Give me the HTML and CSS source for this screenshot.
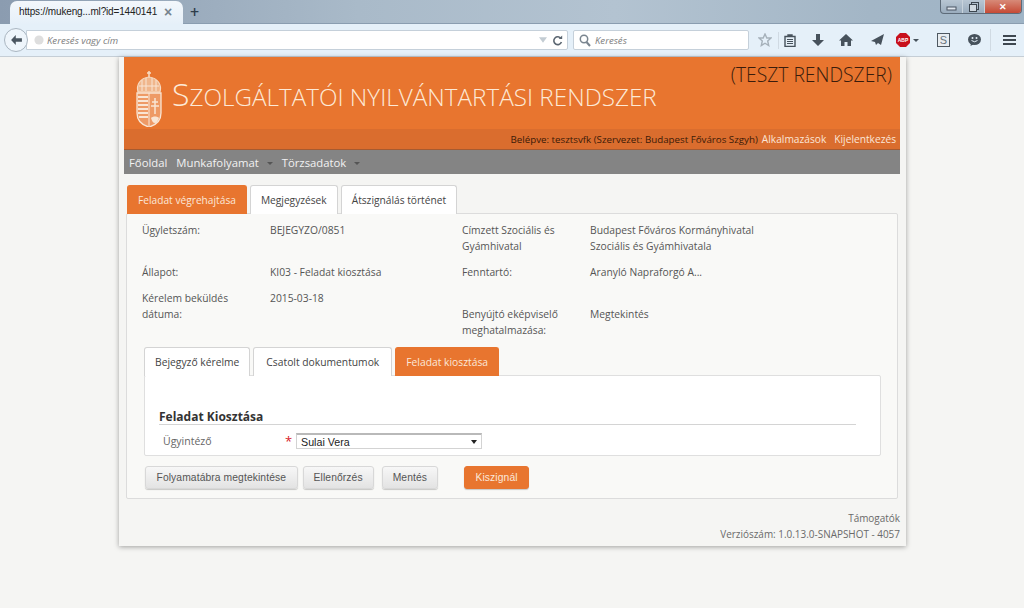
FILE: index.html
```html
<!DOCTYPE html>
<html lang="hu">
<head>
<meta charset="utf-8">
<title>Szolgáltatói nyilvántartási rendszer</title>
<link rel="stylesheet" href="styles.css">
</head>
<body>
<div class="browser">
  <div class="tabstrip">
    <div class="btab"><span class="btab-title">https://mukeng...ml?id=1440141</span><span class="btab-x">×</span></div>
    <span class="newtab">+</span>
    <div class="winctl">
      <span class="wbtn"><svg width="12" height="8" viewBox="0 0 12 8"><rect x="1" y="4" width="9" height="3" fill="#dfe6ee" stroke="#4a5562"/></svg></span>
      <span class="wbtn"><svg width="12" height="12" viewBox="0 0 12 12"><rect x="3.500" y="1.500" width="7" height="7" fill="none" stroke="#3c4650"/><rect x="1.500" y="3.500" width="7" height="7" fill="#cfd8e0" stroke="#3c4650"/></svg></span>
      <span class="wbtn wclose">✕</span>
    </div>
  </div>
  <div class="navbar">
    <span class="back"><svg width="18" height="16" viewBox="0 0 18 16"><path d="M8 1 1.500 8 8 15V10.500h8.500v-5H8z" fill="#4a5560"/></svg></span>
    <div class="urlbar">
      <svg class="globe" width="12" height="12" viewBox="0 0 12 12"><circle cx="6" cy="6" r="5.500" fill="#dedede"/></svg>
      <span class="hint urlhint">Keresés vagy cím</span>
      <svg class="drop" width="8" height="6" viewBox="0 0 10 7"><path d="M0 0h10L5 7z" fill="#c3ccd3"/></svg>
      <svg class="reload" width="11" height="11" viewBox="0 0 14 14"><path d="M11.500 4.500A5 5 0 1 0 12 9" fill="none" stroke="#5a6570" stroke-width="2"/><path d="M8.500 5H13V.5z" fill="#5a6570"/></svg>
    </div>
    <div class="searchbar">
      <svg width="12" height="13" viewBox="0 0 12 13"><circle cx="5" cy="5" r="3.700" fill="none" stroke="#7a858f" stroke-width="1.500"/><path d="m7.500 8 3.500 4" stroke="#7a858f" stroke-width="2"/></svg>
      <span class="hint">Keresés</span>
    </div>
    <div class="tools">
      <svg class="t-star" width="14" height="14" viewBox="0 0 14 14"><path d="m7 1 1.800 4H13L9.700 8l1 4.500L7 10.200 3.300 12.500l1-4.500L1 5h4.200z" fill="none" stroke="#a6b1ba" stroke-width="1.400"/></svg>
      <span class="t-sep"></span>
      <svg class="t-clip" width="12" height="13" viewBox="0 0 12 13"><path d="M4 2.500V1h4v1.500zM1 2.500h10V12.500H1z" fill="none" stroke="#47525c" stroke-width="1.400"/><path d="M3 5.500h6M3 7.500h6M3 9.500h6" stroke="#47525c"/></svg>
      <svg class="t-down" width="12" height="12" viewBox="0 0 12 12"><path d="M4 0h4v6h4l-6 6-6-6h4z" fill="#47525c"/></svg>
      <svg class="t-home" width="14" height="12" viewBox="0 0 14 12"><path d="M7 0 14 6.500h-2V12H8.500V8h-3v4H2V6.500H0z" fill="#47525c"/></svg>
      <svg class="t-send" width="13" height="12" viewBox="0 0 13 12"><path d="M13 0 0 7l4 1 1 3 2-2 3 2z" fill="#47525c"/></svg>
      <svg class="t-abp" width="14" height="14" viewBox="0 0 14 14"><path d="M4 0h6l4 4v6l-4 4H4l-4-4V4z" fill="#c8101c"/><text x="7" y="9" class="abp-text">ABP</text></svg>
      <svg class="t-caret" width="6" height="3" viewBox="0 0 6 3"><path d="M0 0h6L3 3z" fill="#47525c"/></svg>
      <span class="t-s">S</span>
      <svg class="t-chat" width="13" height="12" viewBox="0 0 13 12"><ellipse cx="6.500" cy="5.500" rx="6.500" ry="5.500" fill="#47525c"/><path d="m3 9-.5 3L6 10z" fill="#47525c"/><circle cx="4.500" cy="4" r="1" fill="#e4eef7"/><circle cx="8.500" cy="4" r="1" fill="#e4eef7"/><path d="M3.500 6.500q3 2.500 6 0" fill="none" stroke="#e4eef7"/></svg>
      <span class="t-sep t-sep2"></span>
      <span class="t-menu"><i></i><i></i><i></i></span>
    </div>
  </div>
</div>

<div class="page">
  <div class="sheet">
    <header class="head">
      <div class="brand">
        <svg class="crest" width="28" height="56" viewBox="0 0 28 56">
          <path d="M14 0v6M12 2h4" stroke="#f7dcc4" stroke-width="1.500" fill="none"/>
          <path d="M3 21C1 14 5 7 14 6c9 1 13 8 11 15z" fill="#f0b68c" stroke="#f7dcc4" stroke-width="1.200"/>
          <path d="M7 9v11M11 7v13M17 7v13M21 9v11M4 15h20" stroke="#f9e5d4" stroke-width="1" fill="none"/>
          <path d="M2 22h24v20c0 7-5 12-12 14C7 54 2 49 2 42z" fill="#ee9a66" stroke="#f9e5d4" stroke-width="1.300"/>
          <path d="M14 22v33" stroke="#f9e5d4" stroke-width="1"/>
          <path d="M3 26h10M3 30h10M3 34h10M3 38h10M3 42h10M4 46h9" stroke="#f9e5d4" stroke-width="1.800" fill="none"/>
          <path d="M20 27v16M17 31h6M16 35h8" stroke="#f9e5d4" stroke-width="1.500" fill="none"/>
          <path d="M16 47c2-2 6-2 8 0-1 3-3 5-4 5-2 0-3-2-4-5z" fill="#f9e5d4"/>
        </svg>
        <h1 class="title">Szolgáltatói nyilvántartási rendszer</h1>
        <div class="test">(TESZT RENDSZER)</div>
      </div>
      <div class="userbar">
        <span class="who">Belépve: tesztsvfk (Szervezet: Budapest Főváros Szgyh)</span>
        <a class="ulink">Alkalmazások</a>
        <a class="ulink">Kijelentkezés</a>
      </div>
      <nav class="menu">
        <span class="mi">Főoldal</span>
        <span class="mi">Munkafolyamat<b class="caret"></b></span>
        <span class="mi">Törzsadatok<b class="caret"></b></span>
      </nav>
    </header>

    <div class="tabs tabs-top">
      <span class="tab on">Feladat végrehajtása</span>
      <span class="tab">Megjegyzések</span>
      <span class="tab">Átszignálás történet</span>
    </div>
    <section class="panel">
      <div class="info">
        <div class="lbl">Ügyletszám:</div><div class="val">BEJEGYZO/0851</div>
        <div class="lbl">Címzett Szociális és Gyámhivatal</div><div class="val">Budapest Főváros Kormányhivatal Szociális és Gyámhivatala</div>
        <div class="lbl">Állapot:</div><div class="val">KI03 - Feladat kiosztása</div>
        <div class="lbl">Fenntartó:</div><div class="val">Aranyló Napraforgó A...</div>
        <div class="lbl">Kérelem beküldés dátuma:</div><div class="val">2015-03-18</div>
        <div class="lbl lbl-low">Benyújtó eképviselő meghatalmazása:</div><div class="val val-low">Megtekintés</div>
      </div>
      <div class="tabs tabs-sub">
        <span class="tab">Bejegyző kérelme</span>
        <span class="tab tab-wide">Csatolt dokumentumok</span>
        <span class="tab on">Feladat kiosztása</span>
      </div>
      <div class="subpanel">
        <h2 class="legend">Feladat Kiosztása</h2>
        <div class="field">
          <span class="flabel">Ügyintéző</span>
          <span class="req">*</span>
          <span class="select">Sulai Vera<b class="sel-arrow"></b></span>
        </div>
      </div>
      <div class="actions">
        <button class="btn btn-first">Folyamatábra megtekintése</button>
        <button class="btn">Ellenőrzés</button>
        <button class="btn">Mentés</button>
        <button class="btn btn-primary">Kiszignál</button>
      </div>
    </section>
    <footer class="foot">
      <div>Támogatók</div>
      <div>Verziószám: 1.0.13.0-SNAPSHOT - 4057</div>
    </footer>
  </div>
</div>
</body>
</html>
```
FILE: styles.css
```css
* { box-sizing: border-box; }
html, body { margin: 0; height: 608px; overflow: hidden; }
body { background: #f5f5f3; font-family: "Open Sans", sans-serif; font-size: 10.5px; color: #555; }

.browser { height: 57px; }
.tabstrip {
  height: 24px; display: flex; align-items: flex-end; position: relative;
  background: linear-gradient(90deg, #8b9cb0 0%, #a9bac9 35%, #b3c3d1 60%, #a3b6c6 85%, #9fb4c6 100%);
  border-bottom: 1px solid #8a9db0;
}
.btab {
  width: 173px; height: 23px; margin: 0 0 -1px 10px; padding: 0 0 2px 9px;
  display: flex; align-items: center; justify-content: space-between;
  background: linear-gradient(#f3f7fb, #e6f0f9);
  border-radius: 7px 7px 0 0;
  font: 10px "Liberation Sans", sans-serif; letter-spacing: -.15px; color: #222;
}
.btab-title { white-space: nowrap; }
.btab-x { color: #77838e; font-size: 14px; font-weight: 700; margin-right: 11px; }
.newtab { margin: 0 0 1px 7px; font-size: 16px; line-height: 20px; color: #2f3d4a; font-weight: 600; }
.winctl {
  position: absolute; right: 2px; top: 0; width: 82px; height: 14px;
  display: flex; border: 1px solid #5d6b79; border-top: 0; border-radius: 0 0 4px 4px; overflow: hidden;
  background: linear-gradient(#b8c6d3, #9aacbd);
}
.wbtn { width: 22px; display: flex; align-items: center; justify-content: center; border-right: 1px solid #c8d3dc; }
.wclose { width: 38px; flex: 1; border: 0; color: #fff; font-size: 9px; font-weight: 700; background: linear-gradient(#d78a78, #c64a35); }

.navbar {
  height: 33px; display: flex; align-items: center; padding: 0 0 0 16px;
  background: #e5f0f9; border-bottom: 1px solid #c5ced6;
}
.back {
  width: 24px; height: 24px; margin-right: -1px; border-radius: 50%; background: #eef5fb;
  border: 1px solid #aab6c1; display: flex; align-items: center; justify-content: center;
  margin-left: -12px; position: relative; z-index: 1;
}
.back svg { width: 13px; height: 12px; }
.urlbar {
  width: 542px; height: 20px; margin-left: -1px; padding: 0 4px 0 7px; display: flex; align-items: center;
  background: #fff; border: 1px solid #c5d0da; border-radius: 0 2px 2px 0;
}
.globe { flex: none; width: 10px; height: 10px; margin-right: 3px; }
.hint { font: italic 9.600px "Open Sans", sans-serif; color: #7e7e7e; }
.urlhint { flex: 1; }
.drop { margin-right: 5px; }
.reload { flex: none; }
.searchbar {
  width: 176px; height: 20px; margin-left: 5px; padding: 0 0 0 5px; display: flex; gap: 4px; align-items: center;
  background: #fff; border: 1px solid #c5d0da; border-radius: 2px;
}
.tools { flex: 1; position: relative; height: 33px; }
.tools > * { position: absolute; }
.t-star { left: 9px; top: 9px; }
.t-sep { left: 29px; top: 8px; width: 1px; height: 17px; background: #d0dae3; }
.t-sep2 { left: 241px; height: 22px; top: 5px; }
.t-clip { left: 35px; top: 10px; }
.t-down { left: 63px; top: 10px; }
.t-home { left: 90px; top: 10px; }
.t-send { left: 122px; top: 10px; }
.t-abp { left: 147px; top: 9px; }
.abp-text { font: 700 5px "Liberation Sans", sans-serif; fill: #fff; text-anchor: middle; }
.t-caret { left: 164px; top: 15px; }
.t-s {
  left: 188px; top: 9px; width: 13px; height: 14px; border: 1px solid #4e5861; background: #e8edf1;
  font: 11px/12px "Liberation Sans", sans-serif; color: #69747d; text-align: center;
}
.t-chat { left: 219px; top: 10px; }
.t-menu { left: 254px; top: 11px; width: 13px; display: flex; flex-direction: column; gap: 2px; }
.t-menu i { display: block; height: 2px; background: #3d4750; }

.page { height: 551px; }
.sheet {
  width: 787px; height: 489px; margin-left: 119px; padding: 0 6px 0 5px;
  background: #f5f5f3; box-shadow: 0 1px 5px rgba(0,0,0,.35);
}
.head { background: #e8752f; }
.brand { height: 72px; position: relative; padding: 14px 0 0 11px; display: flex; align-items: flex-start; gap: 9px; background: #e8752f; }
.crest { flex: none; width: 28px; height: 56px; }
.title {
  margin: 3px 0 0; font-weight: 300; font-size: 24.250px; line-height: 40px; color: #fde9d6;
  text-transform: uppercase; font-family: "Open Sans", sans-serif; white-space: nowrap;
}
.title::first-letter { font-size: 32px; }
.test { position: absolute; right: 8px; top: 5px; font-weight: 300; font-size: 19.300px; line-height: 26px; color: #3a1c0c; }
.userbar {
  height: 21px; padding: 0 4px 0 0; display: flex; justify-content: flex-end; align-items: center; gap: 8px;
  background: #da6d2e; border-bottom: 1px solid #a65a30; font-size: 10.200px;
}
.who { color: #3a1a08; margin-right: -4px; font-size: 9.760px; }
.ulink { color: #fbe6d8; }
.menu {
  height: 24px; padding: 0 0 0 5px; display: flex; align-items: center; gap: 9px;
  background: #848484; font-size: 11.300px; color: #f2f2f2;
}
.caret {
  display: inline-block; margin-left: 8px; vertical-align: middle;
  border: 3.500px solid transparent; border-top-color: #555; border-bottom: 0;
}

.tabs { display: flex; gap: 3px; position: relative; z-index: 1; }
.tabs-top { margin: 11px 0 0 3px; height: 28px; }
.tab {
  height: 29px; padding: 0 10px; display: flex; align-items: center;
  background: #fff; border: 1px solid #d4d4d4; border-bottom: 0; border-radius: 3px 3px 0 0;
  font-size: 10.200px; color: #444; white-space: nowrap;
}
.tab.on { background: #e8752f; color: #fbe7d9; border-color: #e8752f; }
.panel {
  width: 772px; height: 286px; margin-left: 2px; padding: 0 0 0 17px;
  background: #f9f9f7; border: 1px solid #dcdcdc; border-radius: 2px; position: relative;
}
.info {
  display: grid; grid-template-columns: 128px 192px 128px 172px;
  margin-left: -2px;
  padding-top: 8px; line-height: 16px; color: #555; font-size: 10.300px;
}
.lbl { padding-right: 24px; }
.val { padding-right: 4px; }
.lbl, .val { margin-bottom: 10px; }
.lbl-low, .val-low { padding-top: 16px; margin-bottom: 0; }
.tabs-sub { height: 28px; margin-top: 9px; }
.tabs-sub .tab { font-size: 10.300px; }
.tabs-sub .tab-wide { padding: 0 12px; }
.subpanel {
  width: 737px; height: 81px; padding: 33px 24px 0 14px;
  background: #fff; border: 1px solid #dfdfdf; border-radius: 2px;
}
.legend {
  margin: 0; height: 16px; font-size: 12px; line-height: 15px; font-weight: 700; color: #333;
  border-bottom: 1px solid #d4d4d4;
}
.field { display: flex; align-items: center; height: 20px; margin-top: 6px; padding-left: 4px; }
.flabel { width: 122px; color: #666; font-size: 10.500px; }
.req { width: 11px; color: #d8212a; font-size: 13px; line-height: 14px; }
.select {
  width: 186px; height: 16px; padding: 0 4px 0 4px; display: flex; align-items: center; justify-content: space-between;
  background: #fff; border: 1px solid #d3d3d3; border-top: 2px solid #b9b9b9;
  font: 10.700px "Liberation Sans", sans-serif; color: #222;
}
.sel-arrow { border: 3px solid transparent; border-top: 4px solid #222; border-bottom: 0; }
.actions { display: flex; align-items: center; gap: 8px; margin: 10px 0 0 1px; }
.btn {
  height: 23px; padding: 0 10px; border: 1px solid #d8d8d8; border-radius: 3px;
  background: linear-gradient(#f7f7f7, #e3e3e3); box-shadow: 0 1px 1px rgba(0,0,0,.2);
  font: 10.300px "Liberation Sans", sans-serif; letter-spacing: .1px; color: #555;
}
.btn-first { padding: 0 10.500px; margin-right: -3px; }
.btn-primary { padding: 0 10.500px; margin-left: 18px; background: #e8752f; border-color: #e8752f; color: #fbe7d9; }
.foot { padding: 11px 0 0 0; text-align: right; font-size: 9.950px; line-height: 16px; color: #6a6a6a; }
```
